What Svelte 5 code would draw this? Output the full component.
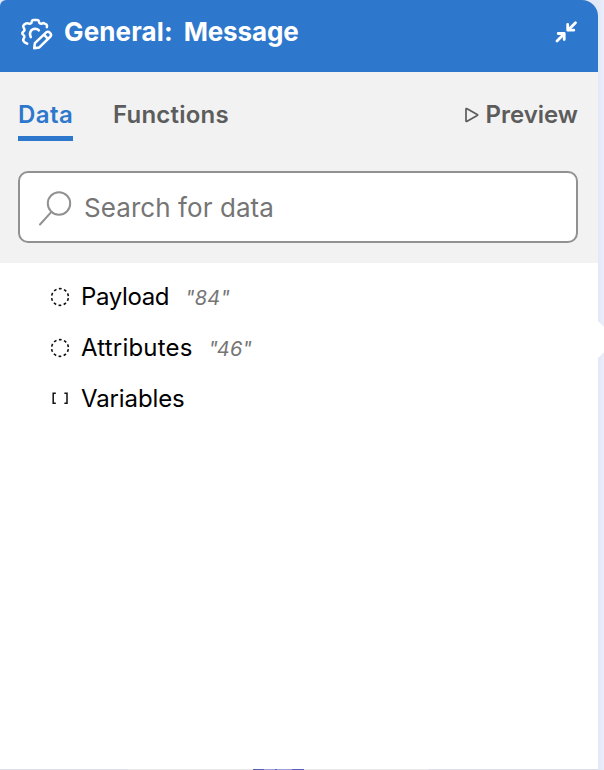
<script>
  const rows = [
    { name: 'Payload', value: '"84"', kind: 'object' },
    { name: 'Attributes', value: '"46"', kind: 'object' },
    { name: 'Variables', value: '', kind: 'array' }
  ];
</script>

<main>
  <section class="panel">
    <header>
      <svg class="gear" width="34" height="34" viewBox="0 0 34 34" fill="none" stroke="#fff" stroke-width="2.5" stroke-linecap="round" stroke-linejoin="round">
        <path d="M7.2 26.6 L4.6 25.3 Q2.5 23.7 3.6 21.6 L4.4 20.2 Q4.7 18.5 3 17.5 Q1.6 16.3 3 15 Q5 13.7 4.3 12 L3.5 10.3 Q2.8 8.4 4.5 7.3 L6.2 6.4 Q7.6 5.8 8.9 6.6 Q11.2 7.3 11.7 4.9 Q11.9 3 13.7 3 H17 Q18.8 3 19.1 4.9 Q19.6 7.3 21.9 6.6 Q23.4 5.6 25 6.7 L26.5 7.6 Q27.5 8.6 26.8 10.1" />
        <path d="M10.8 20.2 C8.6 15.6 11.2 12 15 11.8 Q17.6 11.8 18.9 13.4" />
        <path d="M14.2 31.2 L14.9 26.1 L26.2 15.3 Q28.2 14 30 15.8 Q31.9 17.7 30.5 19.5 L19.3 30.4 Z M24 17.7 L28 21.9" />
      </svg>
      <h1><span>General:</span><span class="subject">Message</span></h1>
      <svg class="collapse" width="24" height="24" viewBox="0 0 24 24" fill="none" stroke="#fff" stroke-width="2.8" stroke-linecap="round" stroke-linejoin="round">
        <path d="M21.5 2.8 L14.5 9.8 M3 21 L9.5 14.5" />
        <path d="M13.7 4.5 V10.2 H19.8 M4.2 13.5 H10.2 V19.6" />
      </svg>
    </header>
    <div class="tools">
      <nav>
        <button class="tab active">Data</button>
        <button class="tab functions">Functions</button>
        <button class="tab preview">
          <svg width="14" height="16" viewBox="0 0 14 16" fill="none" stroke="#5c5c5c" stroke-width="1.7" stroke-linejoin="round"><path d="M1 2.2 V13.8 Q1 14.9 2.1 14.3 L12.2 8.6 Q13.1 8 12.2 7.4 L2.1 1.7 Q1 1.2 1 2.2Z" /></svg>
          <span>Preview</span>
        </button>
      </nav>
      <label class="search">
        <svg width="34" height="36" viewBox="0 0 34 36" fill="none" stroke="#919191" stroke-width="2" stroke-linecap="round"><circle cx="21" cy="13.5" r="11.2" /><path d="M13.4 21.8 L2 34.5" /></svg>
        <input type="text" placeholder="Search for data" />
      </label>
    </div>
    <ul>
      {#each rows as row}
        <li>
          {#if row.kind === 'object'}
            <svg width="20" height="20" viewBox="0 0 20 20" fill="none" stroke="#111" stroke-width="1.6"><circle cx="10" cy="10" r="8.4" stroke-dasharray="2.8 2.478" stroke-dashoffset="-1.24" /></svg>
          {:else}
            <svg width="20" height="20" viewBox="0 0 20 20" fill="none" stroke="#111" stroke-width="1.5"><path d="M5.8 4.2 H3.2 V14.2 H5.8 M14.4 4.2 H17 V14.2 H14.4" /></svg>
          {/if}
          <span class={['name', row.name.toLowerCase()]}>{row.name}</span>
          {#if row.value}<em>{row.value}</em>{/if}
        </li>
      {/each}
    </ul>
    <footer></footer>
  </section>
  <div class="pointer"></div>
</main>

<style>
  :global(body) { margin: 0; }
  main { position: relative; width: 604px; height: 770px; overflow: hidden; background: linear-gradient(90deg, #e2e8f5 598px, #eaeefb 604px); font-family: Inter, "Liberation Sans", sans-serif; }
  .panel { display: flex; flex-direction: column; width: 598px; height: 770px; background: #fff; border-radius: 6px 16px 0 0; overflow: hidden; }
  header { height: 72px; flex: none; box-sizing: border-box; display: flex; align-items: flex-start; padding: 17px 20px 0; background: #2d77cd; color: #fff; }
  .gear { flex: none; }
  h1 { display: flex; margin: -1px 0 0 10px; font-size: 26px; line-height: 32px; font-weight: 700; letter-spacing: .12px; }
  .subject { margin-left: 11px; letter-spacing: -.15px; }
  .collapse { margin: 3px 0 0 auto; }
  .tools { height: 191px; flex: none; box-sizing: border-box; padding: 28px 20px 0 18px; background: #f2f2f2; }
  nav { display: flex; height: 41px; }
  button { border: 0; padding: 0; background: none; font: 600 24px/30px Inter, "Liberation Sans", sans-serif; color: #5c5c5c; white-space: nowrap; }
  .tab { height: 41px; box-sizing: border-box; display: flex; align-items: flex-start; }
  .active { width: 55px; border-bottom: 5px solid #2d77cd; color: #2d77cd; letter-spacing: .45px; }
  .functions { margin-left: 40px; letter-spacing: .22px; }
  .preview { margin-left: auto; }
  .preview svg { margin: 7px 6px 0 0; }
  .search { display: flex; align-items: center; box-sizing: border-box; height: 72px; margin-top: 30px; padding: 2px 0 0 18px; border: 2px solid #919191; border-radius: 10px; background: #fff; }
  input { flex: 1; min-width: 0; margin-left: 12px; padding: 0; border: 0; outline: 0; background: none; font: 400 26px/34px Inter, "Liberation Sans", sans-serif; letter-spacing: .07px; }
  input::placeholder { color: #757575; opacity: 1; }
  ul { flex: 1; list-style: none; margin: 0; padding: 8px 0 0 50px; }
  li { display: flex; align-items: center; height: 51px; font-size: 24px; color: #000; }
  .name { margin-left: 11px; }
  .payload { letter-spacing: -.35px; }
  .attributes { letter-spacing: .2px; }
  .variables { letter-spacing: -.12px; }
  em { margin-left: 16px; padding-top: 3px; font-size: 20px; letter-spacing: .2px; color: #757575; }
  footer { flex: none; height: 1px; background: linear-gradient(90deg, #dcdce9 128px, #e8e8e8 128px 253px, #5960bd 253px 264px, #9ca0d8 264px 275px, #5960bd 275px 277px, #9ca0d8 277px 292px, #5960bd 292px 304px, #e8e8e8 304px 429px, #dcdce9 429px); }
  .pointer { position: absolute; left: 598px; top: 321px; width: 6px; height: 37px; background: #fff; clip-path: polygon(0 0, 6px 6px, 6px 31px, 0 37px); }
</style>
